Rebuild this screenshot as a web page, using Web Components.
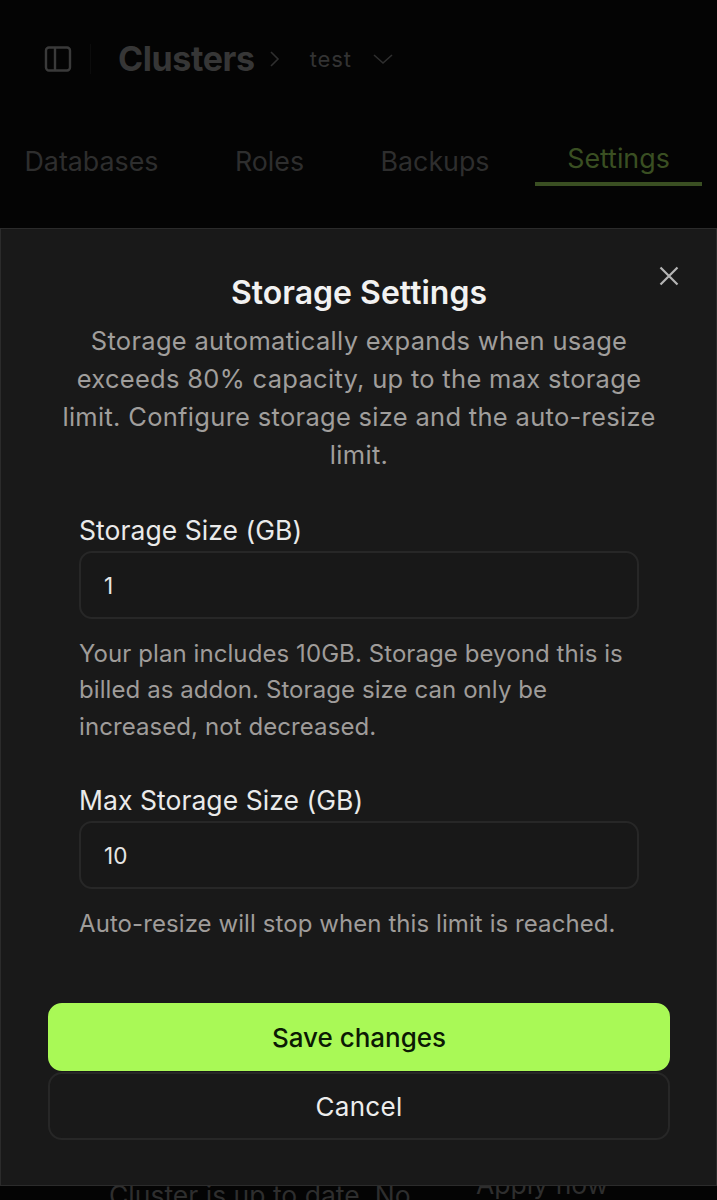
<!DOCTYPE html>
<html lang="en">

<head>
  <meta charset="UTF-8">
  <meta name="viewport" content="width=device-width, initial-scale=1.0">
  <title>Storage Settings</title>
  <style>
    html, body { margin: 0; height: 1200px; overflow: hidden; background: #040404; }
    body { position: relative; font-family: Inter, "Liberation Sans", sans-serif; }
  </style>
</head>

<body>
  <template id="page-behind">
    <style>
      :host { display: block; height: 1200px; overflow: hidden; color: #363636; }
      header { display: flex; align-items: center; height: 118px; padding-left: 44px; box-sizing: border-box; }
      header svg { display: block; flex: none; }
      .sep { width: 1px; height: 30px; background: #0c0c0c; margin: 0 27px 0 18px; }
      h1 { margin: 0; font-size: 34px; line-height: 38px; font-weight: 700; letter-spacing: -0.4px; color: #363636; }
      .crumb { margin-left: 14px; }
      .test { margin: 0 20px 0 29px; font-size: 22px; letter-spacing: 0.9px; color: #333; }
      nav { display: flex; height: 68px; box-sizing: border-box; }
      nav div { display: flex; align-items: center; justify-content: center; font-size: 26.8px; color: #2e2e2e; height: 68px; box-sizing: border-box; padding-top: 18px; }
      nav .db { width: 183px; }
      nav .ro { width: 173px; }
      nav .ba { width: 158px; }
      nav .se { width: 167px; margin-left: 21px; color: #3a4f22; border-bottom: 4px solid #3a4f22; padding-top: 16px; }
      .row { display: flex; margin-top: 992px; font-size: 26.5px; color: #2e2e2e; line-height: 34px; }
      .row .a { margin-left: 109px; width: 367px; }
      .row .b { margin-top: -11px; }
    </style>
    <header>
      <svg width="28" height="28" viewBox="0 0 28 28" fill="none" stroke="#3a3a3a" stroke-width="2.4"><rect x="2" y="2.5" width="24" height="23" rx="3"/><path d="M11 2.5v23"/></svg>
      <span class="sep"></span>
      <h1>Clusters</h1>
      <svg class="crumb" width="12" height="18" viewBox="0 0 12 18" fill="none" stroke="#2f2f2f" stroke-width="1.6"><path d="M2 2l7 7-7 7"/></svg>
      <span class="test">test</span>
      <svg width="22" height="12" viewBox="0 0 22 12" fill="none" stroke="#2f2f2f" stroke-width="1.6"><path d="M2 2l9 8 9-8"/></svg>
    </header>
    <nav>
      <div class="db">Databases</div>
      <div class="ro">Roles</div>
      <div class="ba">Backups</div>
      <div class="se">Settings</div>
    </nav>
    <div class="row">
      <div class="a">Cluster is up to date. No</div>
      <div class="b">Apply now</div>
    </div>
  </template>

  <template id="storage-field">
    <style>
      :host { display: block; }
      label { display: block; font-size: 26.5px; line-height: 34px; font-weight: 400; letter-spacing: 0.05px; color: #eaeaea; }
      .input { height: 68px; box-sizing: border-box; margin-top: 4px; padding: 0 23px; display: flex; align-items: center; border: 2px solid #272727; border-radius: 13px; background: #181818; color: #e6e6e6; font-size: 22.5px; }
      p { margin: 16.5px 0 0; font-size: 24px; line-height: 36.5px; color: #9f9c9a; letter-spacing: 0.08px; }
    </style>
    <label><slot name="label"></slot></label>
    <div class="input"><slot name="value"></slot></div>
    <p><slot name="hint"></slot></p>
  </template>

  <template id="sheet-button">
    <style>
      :host { display: flex; height: 68px; align-items: center; justify-content: center; box-sizing: border-box; border-radius: 14px; font-size: 26px; font-weight: 400; letter-spacing: 0.3px; border: 2px solid #272727; color: #ededed; }
      :host([primary]) { background: #a9f956; border-color: #a9f956; color: #0c1a04; font-weight: 500; letter-spacing: 0; }
    </style>
    <slot></slot>
  </template>

  <template id="storage-sheet">
    <style>
      :host { display: block; position: absolute; left: 0; right: 0; top: 228px; height: 958px; box-sizing: border-box; background: #191919; border: 1px solid #2b2b2b; padding: 43px 46px 0 47px; }
      .close { position: absolute; top: 36px; right: 36px; width: 22px; height: 22px; }
      h2 { margin: 0; text-align: center; font-size: 32px; line-height: 42px; font-weight: 600; color: #f2f2f2; }
      .desc { margin: 8px 12px 0; text-align: center; font-size: 25.5px; line-height: 38px; color: #a09e9c; letter-spacing: 0.3px; }
      .fields { margin: 39px 31px 0; display: flex; flex-direction: column; gap: 38px; }
      .actions { display: flex; flex-direction: column; gap: 1px; margin-top: 61px; }
    </style>
    <svg class="close" viewBox="0 0 22 22" fill="none" stroke="#b5b5b5" stroke-width="2.2"><path d="M2.5 2.5l17 17M19.5 2.5l-17 17"/></svg>
    <h2>Storage Settings</h2>
    <p class="desc">Storage automatically expands when usage exceeds 80% capacity, up to the max storage limit. Configure storage size and the auto-resize limit.</p>
    <div class="fields">
      <storage-field>
        <span slot="label">Storage Size (GB)</span>
        <span slot="value">1</span>
        <span slot="hint">Your plan includes 10GB. Storage beyond this is billed as addon. Storage size can only be increased, not decreased.</span>
      </storage-field>
      <storage-field>
        <span slot="label">Max Storage Size (GB)</span>
        <span slot="value">10</span>
        <span slot="hint">Auto-resize will stop when this limit is reached.</span>
      </storage-field>
    </div>
    <div class="actions">
      <sheet-button primary>Save changes</sheet-button>
      <sheet-button>Cancel</sheet-button>
    </div>
  </template>

  <page-behind></page-behind>
  <storage-sheet></storage-sheet>

  <script>
    // every element just clones the template with its own name
    for (const name of ["page-behind", "storage-field", "sheet-button", "storage-sheet"]) {
      customElements.define(
        name,
        class extends HTMLElement {
          constructor() {
            super()
            const shadowRoot = this.attachShadow({ mode: "open" })
            shadowRoot.appendChild(document.getElementById(name).content.cloneNode(true))
          }
        },
      )
    }
  </script>
</body>

</html>
